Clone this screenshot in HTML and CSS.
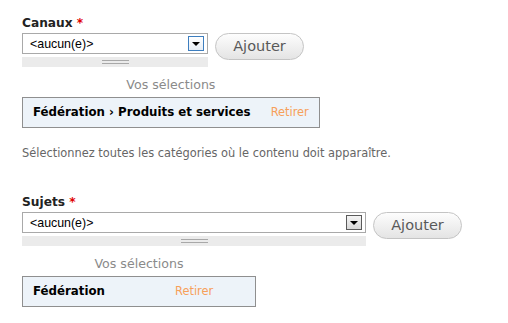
FILE: index.html
```html
<!DOCTYPE html>
<html lang="fr">
<head>
<meta charset="utf-8">
<title>Catégories</title>
<link rel="stylesheet" href="styles.css">
</head>
<body>
<div class="page">
  <div class="field">
    <div class="label">Canaux <span class="req">*</span></div>
    <div class="row">
      <div class="picker picker--narrow">
        <div class="select"><span class="select-text">&lt;aucun(e)&gt;</span><span class="drop drop--focus"><span class="arrow"></span></span></div>
        <div class="grip"><span class="grip-lines"></span></div>
      </div>
      <button class="add" type="button">Ajouter</button>
    </div>
    <table class="sel">
      <caption>Vos sélections</caption>
      <tr><td class="term">Fédération › Produits et services</td><td class="remove">Retirer</td></tr>
    </table>
    <p class="desc">Sélectionnez toutes les catégories où le contenu doit apparaître.</p>
  </div>
  <div class="field field--next">
    <div class="label">Sujets <span class="req">*</span></div>
    <div class="row">
      <div class="picker picker--wide">
        <div class="select"><span class="select-text">&lt;aucun(e)&gt;</span><span class="drop"><span class="arrow"></span></span></div>
        <div class="grip"><span class="grip-lines"></span></div>
      </div>
      <button class="add" type="button">Ajouter</button>
    </div>
    <table class="sel sel--narrow">
      <caption>Vos sélections</caption>
      <tr><td class="term">Fédération</td><td class="remove">Retirer</td></tr>
    </table>
  </div>
</div>
</body>
</html>
```

FILE: styles.css
```css
* { box-sizing: border-box; }
html, body { margin: 0; padding: 0; background: #fff; }
body { font-family: "DejaVu Sans", Verdana, sans-serif; color: #222; }

.page { padding: 16px 22px 0; }

.field--next { margin-top: 35px; }

.label {
  font-weight: bold;
  font-size: 12.2px;
  line-height: 15px;
  color: #222;
  margin-bottom: 2px;
}
.req { color: #e00000; }

.row { display: flex; align-items: flex-start; gap: 7px; }

.picker { display: flex; flex-direction: column; gap: 3px; }
.picker--narrow { width: 186px; }
.picker--wide { width: 344px; }

.select {
  height: 21px;
  border: 1px solid #a9a9a9;
  background: #fff;
  display: flex;
  align-items: center;
  justify-content: space-between;
  padding: 0 3px 0 7px;
}
.select-text {
  font-family: "Liberation Sans", Arial, sans-serif;
  font-size: 12.4px;
  color: #000;
}
.drop {
  width: 16px;
  height: 15px;
  border: 1px solid #5a5a5a;
  background: linear-gradient(#f4f4f4, #d8d8d8);
  display: flex;
  align-items: center;
  justify-content: center;
}
.drop--focus {
  border-color: #3d7ebf;
  background: linear-gradient(#ffffff, #e6edf5);
}
.arrow {
  width: 0;
  height: 0;
  border-left: 4px solid transparent;
  border-right: 4px solid transparent;
  border-top: 4px solid #000;
  margin-top: 1px;
}

.grip {
  height: 10px;
  background: #ebebeb;
  display: flex;
  align-items: center;
  justify-content: center;
}
.grip-lines {
  width: 27px;
  height: 4px;
  border-top: 1px solid #a8a8a8;
  border-bottom: 1px solid #a8a8a8;
}

.add {
  font-family: "DejaVu Sans", Verdana, sans-serif;
  font-size: 14.5px;
  color: #595959;
  height: 27px;
  width: 89px;
  padding: 0;
  border: 1px solid #c4c4c4;
  border-radius: 14px;
  background: linear-gradient(#fdfdfd, #e4e4e4);
  line-height: 25px;
}

.sel {
  margin-top: 10px;
  border-collapse: collapse;
  border: 1px solid #8f8f8f;
  background: #edf3f9;
}
.sel--narrow { width: 234px; }
.sel caption {
  font-size: 12.6px;
  line-height: 16px;
  color: #8a8a8a;
  padding-bottom: 4px;
  text-align: center;
}
.sel td {
  padding: 7px 10px;
  line-height: 15px;
  white-space: nowrap;
}
.term { font-weight: bold; font-size: 11.8px; color: #000; }
.remove { font-size: 11.4px; color: #f7a05a; }

.desc {
  margin: 18px 0 0;
  font-size: 11.4px;
  line-height: 14px;
  color: #666;
}
```
